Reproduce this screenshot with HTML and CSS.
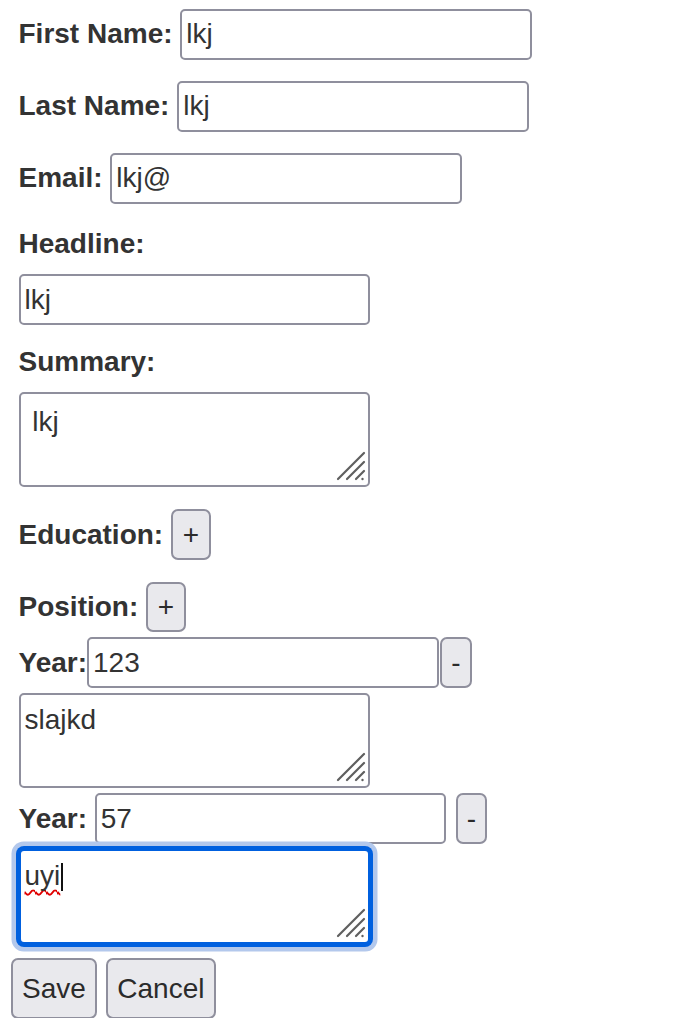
FILE: index.html
```html
<!DOCTYPE html>
<html lang="en">
<head>
<meta charset="utf-8">
<title>Edit Profile</title>
<link rel="stylesheet" href="styles.css">
</head>
<body>
<form class="form">
  <div class="row row-first">
    <label class="lbl" for="fn">First Name:</label>
    <input class="field sp" id="fn" type="text" value="lkj">
  </div>
  <div class="row">
    <label class="lbl" for="ln">Last Name:</label>
    <input class="field sp" id="ln" type="text" value="lkj">
  </div>
  <div class="row">
    <label class="lbl" for="em">Email:</label>
    <input class="field sp" id="em" type="text" value="lkj@">
  </div>

  <label class="lbl block-label headline-label" for="hl">Headline:</label>
  <input class="field block-field" id="hl" type="text" value="lkj">

  <label class="lbl block-label summary-label" for="su">Summary:</label>
  <div class="ta-wrap summary-wrap">
    <textarea class="ta ta-summary" id="su" spellcheck="false"> lkj</textarea>
    <svg class="grip" viewBox="0 0 40 40" width="40" height="40" aria-hidden="true">
      <path d="M34 6 L8 32 M34 15 L17 32 M34 24 L26 32" />
      <circle cx="32.5" cy="32" r="1.2" />
    </svg>
  </div>

  <div class="row row-edu">
    <span class="lbl">Education:</span>
    <button class="btn btn-plus" type="button">+</button>
  </div>
  <div class="row row-pos">
    <span class="lbl">Position:</span>
    <button class="btn btn-plus" type="button">+</button>
  </div>

  <div class="row row-year row-year1">
    <span class="lbl">Year:</span>
    <input class="field" type="text" value="123">
    <button class="btn btn-minus" type="button">-</button>
  </div>
  <div class="ta-wrap stack-gap">
    <textarea class="ta" spellcheck="false">slajkd</textarea>
    <svg class="grip" viewBox="0 0 40 40" width="40" height="40" aria-hidden="true">
      <path d="M34 6 L8 32 M34 15 L17 32 M34 24 L26 32" />
      <circle cx="32.5" cy="32" r="1.2" />
    </svg>
  </div>

  <div class="row row-year row-year2">
    <span class="lbl">Year:</span>
    <input class="field sp" type="text" value="57">
    <button class="btn btn-minus btn-minus-sp" type="button">-</button>
  </div>
  <div class="ta-wrap focus-wrap">
    <div class="ta ta-focus" role="textbox" aria-multiline="true"><span class="misspelt">uyi</span><span class="caret"></span></div>
    <svg class="grip" viewBox="0 0 40 40" width="40" height="40" aria-hidden="true">
      <path d="M34 6 L8 32 M34 15 L17 32 M34 24 L26 32" />
      <circle cx="32.5" cy="32" r="1.2" />
    </svg>
  </div>

  <div class="actions">
    <button class="btn btn-action" type="submit">Save</button>
    <button class="btn btn-action btn-cancel" type="button">Cancel</button>
  </div>
</form>
</body>
</html>
```

FILE: styles.css
```css
html, body {
  margin: 0;
  padding: 0;
  background: #ffffff;
}

body {
  font-family: "Liberation Sans", Arial, Helvetica, sans-serif;
  font-size: 28px;
  color: #333333;
}

.form {
  padding-left: 18.5px;
}

.row {
  display: flex;
  align-items: center;
  height: 50.75px;
  margin-top: 21.25px;
}

.row-first {
  margin-top: 8.75px;
}

.lbl {
  font-weight: bold;
  line-height: 32px;
  white-space: nowrap;
  color: #333333;
}

.block-label {
  display: block;
}

.headline-label {
  margin-top: 24.85px;
}

.summary-label {
  margin-top: 21px;
}

.field {
  box-sizing: border-box;
  width: 351.5px;
  height: 50.75px;
  margin: 0;
  padding: 0 4px;
  border: 2px solid #8f8f9d;
  border-radius: 5px;
  background: #ffffff;
  font: inherit;
  color: #333333;
  outline: none;
}

.row .field.sp {
  margin-left: 7.78px;
}

.block-field {
  display: block;
  margin-top: 14px;
}

.btn {
  box-sizing: border-box;
  height: 50.75px;
  margin: 0;
  padding: 0 9px;
  border: 2px solid #8f8f9d;
  border-radius: 7px;
  background: #e9e9ed;
  font: inherit;
  line-height: 32px;
  color: #2b2b2b;
}

.btn.btn-plus {
  margin-left: 7.5px;
  padding: 0 10px;
}

.btn.btn-minus {
  margin-left: 1.75px;
}

.btn.btn-minus-sp {
  margin-left: 9.53px;
}

.row-edu {
  margin-top: 22px;
}

.row-pos {
  margin-top: 21.5px;
}

.row-year1 {
  margin-top: 4.85px;
}

.row-year2 {
  margin-top: 5px;
}

.ta-wrap {
  position: relative;
  width: 351.5px;
  height: 95px;
}

.summary-wrap {
  margin-top: 14.25px;
}

.stack-gap {
  margin-top: 5.25px;
}

.focus-wrap {
  margin-top: 5.5px;
}

.ta {
  display: block;
  box-sizing: border-box;
  width: 351.5px;
  height: 95px;
  margin: 0;
  padding: 9px 4px;
  border: 2px solid #8f8f9d;
  border-radius: 5px;
  background: #ffffff;
  font: inherit;
  line-height: normal;
  color: #333333;
  resize: none;
  overflow: hidden;
  outline: none;
  white-space: pre-wrap;
}

.ta-summary {
  padding-top: 12px;
}

.ta-focus {
  border-color: #0060df;
  box-shadow: 0 0 0 3px #0060df, 0 0 0 7.5px #b3c8ec;
}

.misspelt {
  text-decoration: underline wavy #e00000;
  text-decoration-thickness: 2px;
  text-underline-offset: 4px;
  text-decoration-skip-ink: none;
}

.caret {
  display: inline-block;
  width: 1.5px;
  height: 28px;
  margin-left: 1px;
  background: #111111;
  vertical-align: -6px;
}

.grip {
  position: absolute;
  right: 0;
  bottom: 0;
  overflow: visible;
  pointer-events: none;
}

.grip path {
  fill: none;
  stroke: #5f5f5f;
  stroke-width: 2.2;
  stroke-linecap: round;
}

.grip circle {
  fill: #5f5f5f;
}

.actions {
  display: flex;
  margin-top: 13.5px;
  margin-left: -7.5px;
}

.btn.btn-action {
  height: 61px;
  padding-top: 2px;
}

.btn.btn-cancel {
  margin-left: 9.5px;
}
```
